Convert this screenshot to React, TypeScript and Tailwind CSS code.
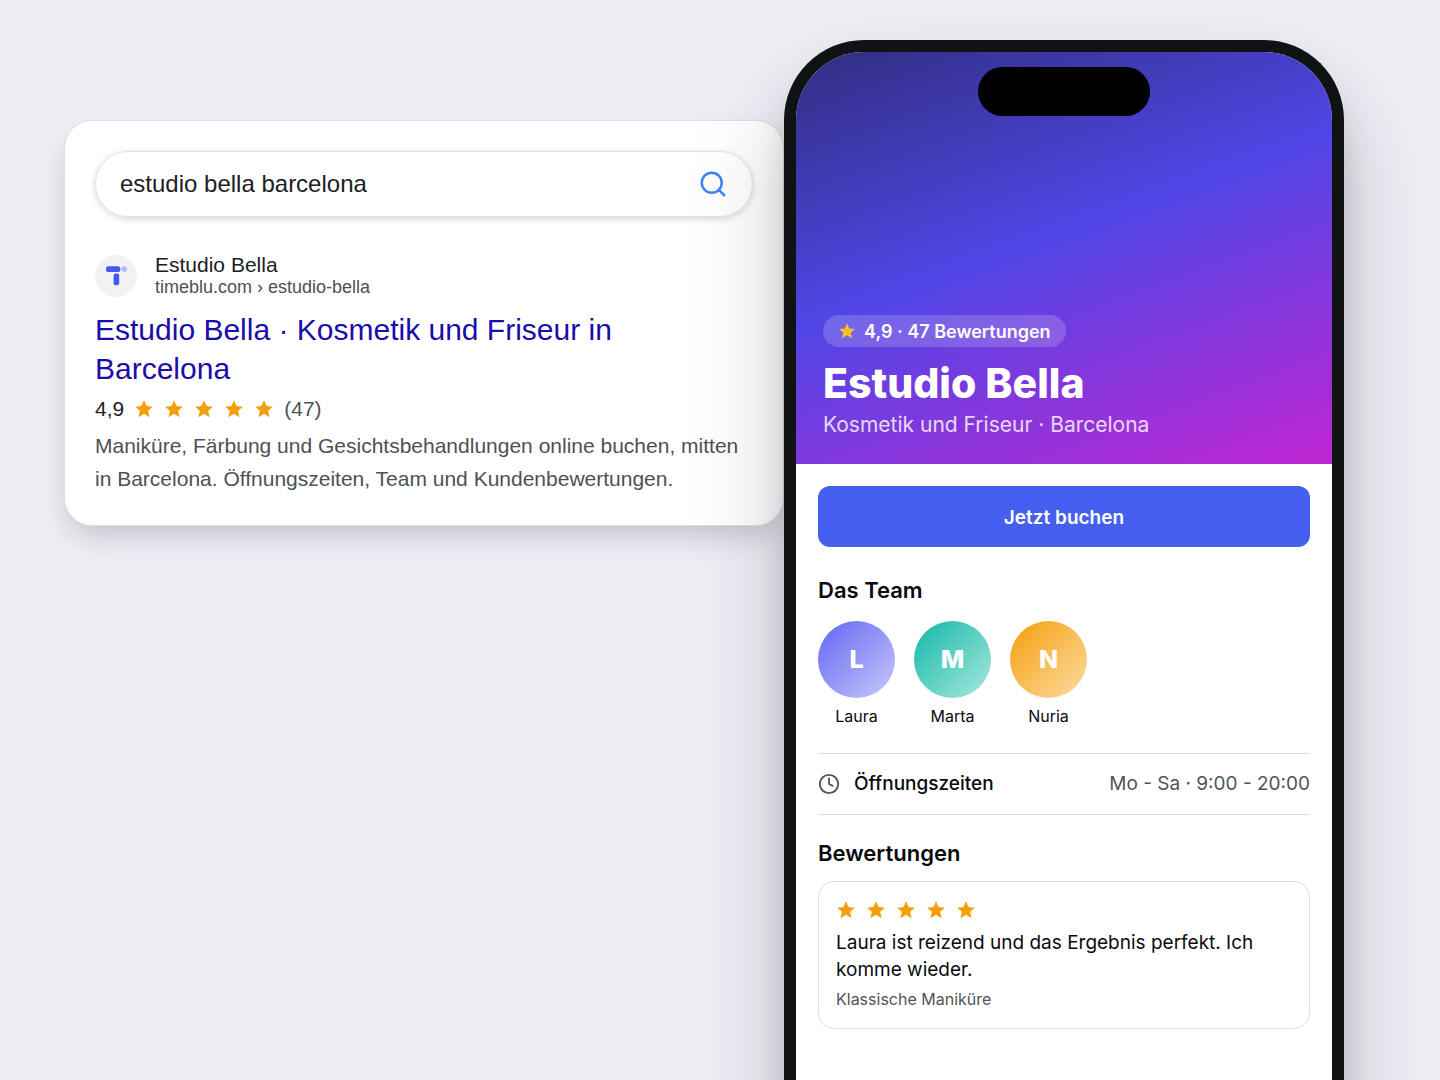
import { Clock, Search } from 'lucide-react';

const team = [
  { name: 'Laura', circle: 'bg-linear-135/srgb from-[#6366f1] to-[#c7c9fb]' },
  { name: 'Marta', circle: 'bg-linear-135/srgb from-[#14b8a6] to-[#a7e8de]' },
  { name: 'Nuria', circle: 'bg-linear-135/srgb from-[#f59e0b] to-[#fcdca3]' },
];

function Star({ className }: { className: string }) {
  return (
    <svg viewBox="0 0 24 24" fill="currentColor" className={className} aria-hidden="true">
      <path d="M12 1.5l3.1 7 7.6.7-5.7 5 1.7 7.6-6.7-4-6.7 4L7 14.2l-5.7-5 7.6-.7z" />
    </svg>
  );
}

function Stars() {
  return (
    <div className="flex gap-2.5 text-[#f59e0b]" role="img" aria-label="5 von 5 Sternen">
      <Star className="size-5" />
      <Star className="size-5" />
      <Star className="size-5" />
      <Star className="size-5" />
      <Star className="size-5" />
    </div>
  );
}

function SearchCard() {
  return (
    <section className="mt-20 min-w-0 flex-1 rounded-[28px] border border-[#dcdee3] bg-white p-[30px] font-['Liberation_Sans',Arial,sans-serif] shadow-[0_14px_30px_-6px_rgba(20,22,40,0.22)]">
      <form className="flex h-[66px] items-center rounded-full border border-[#dfe1e5] px-6 shadow-[0_2px_6px_rgba(32,33,36,0.18)]">
        <input
          type="text"
          aria-label="Suche"
          defaultValue="estudio bella barcelona"
          className="min-w-0 flex-1 bg-transparent text-[24px] text-[#202124] outline-none"
        />
        <button type="submit" aria-label="Suchen" className="text-[#4285f4]">
          <Search className="size-[30px]" />
        </button>
      </form>

      <div className="mt-9 flex items-end gap-[18px]">
        <div className="flex size-[42px] items-center justify-center rounded-full bg-[#f1f3f4]">
          <svg viewBox="0 0 22 20" className="h-5 w-[22px]" aria-hidden="true">
            <rect x="1" y="0.3" width="14.3" height="5.6" rx="2" fill="#4759ef" />
            <rect x="8.6" y="7.5" width="5.6" height="11.8" rx="2" fill="#4759ef" />
            <circle cx="19.2" cy="3.1" r="2.8" fill="#b4b8fb" />
          </svg>
        </div>
        <div>
          <p className="text-[21px] leading-6 text-[#202124]">Estudio Bella</p>
          <p className="text-[18px] leading-5 text-[#4d5156]">timeblu.com › estudio-bella</p>
        </div>
      </div>

      <h1 className="mt-[13px] text-[30px] leading-[39px] text-[#1a0dab]">
        <a href="#profil">Estudio Bella · Kosmetik und Friseur in Barcelona</a>
      </h1>
      <div className="mt-[9px] flex items-center gap-2.5 text-[21px] leading-6 text-[#4d5156]">
        <span className="text-[#202124]">4,9</span>
        <Stars />
        <span>(47)</span>
      </div>
      <p className="mt-2 text-[21px] leading-[33px] text-[#4d5156]">
        Maniküre, Färbung und Gesichtsbehandlungen online buchen, mitten in Barcelona. Öffnungszeiten, Team und Kundenbewertungen.
      </p>
    </section>
  );
}

function Phone() {
  return (
    <div
      id="profil"
      className="relative -mb-40 w-[560px] shrink-0 self-stretch rounded-t-[80px] border-12 border-b-0 border-[#111214] bg-white font-[Inter,sans-serif] text-[#0a0a0f] shadow-[0_50px_100px_0_rgba(20,22,40,0.2),0_30px_40px_-10px_rgba(0,0,0,0.25)]"
    >
      {/* dynamic island */}
      <div className="absolute top-[15px] left-1/2 h-[49px] w-[172px] -translate-x-1/2 rounded-full bg-black" />

      <header className="flex h-[412px] flex-col items-start justify-end rounded-t-[68px] bg-linear-160/srgb from-[#312e81] via-[#4f46e5] via-45% to-[#c026d3] px-[27px] pb-[25px] text-white">
        <div className="flex h-8 items-center gap-2 rounded-full bg-white/18 px-[15px] text-[18px] font-semibold">
          <Star className="size-[18px] text-[#fbbf24]" />
          4,9 · 47 Bewertungen
        </div>
        <h2 className="mt-3 text-[41px] leading-[48px] font-extrabold">Estudio Bella</h2>
        <p className="mt-1 text-[21px] leading-7 text-white/80">Kosmetik und Friseur · Barcelona</p>
      </header>

      <div className="px-[22px] pt-[22px]">
        <button type="button" className="h-[61px] w-full rounded-xl bg-[#465fef] pt-[3px] text-[19px] font-semibold text-white">
          Jetzt buchen
        </button>

        <h3 className="mt-7 text-[22px] leading-[30px] font-semibold">Das Team</h3>
        <ul className="mt-4 flex gap-[19px]">
          {team.map((member) => (
            <li key={member.name} className="flex flex-col items-center gap-2">
              <div className={`flex size-[77px] items-center justify-center rounded-full text-[25px] font-extrabold text-white ${member.circle}`}>
                {member.name[0]}
              </div>
              <span className="text-[16px] leading-5">{member.name}</span>
            </li>
          ))}
        </ul>

        <div className="mt-[27px] flex h-[62px] items-center border-y border-[#dedee2] text-[19px]">
          <Clock className="size-[22px] text-[#52525b]" />
          <span className="ml-3.5 font-medium">Öffnungszeiten</span>
          <span className="ml-auto text-[#52525b]">Mo - Sa · 9:00 - 20:00</span>
        </div>

        <h3 className="mt-[23px] text-[22px] leading-[30px] font-semibold">Bewertungen</h3>
        <article className="mt-[13px] rounded-2xl border border-[#dedee2] px-[17px] pt-[18px] pb-[17px]">
          <Stars />
          <p className="mt-[9px] text-[19px] leading-[27px]">Laura ist reizend und das Ergebnis perfekt. Ich komme wieder.</p>
          <p className="mt-1 text-[16px] leading-6 text-[#52525b]">Klassische Maniküre</p>
        </article>
      </div>
    </div>
  );
}

export default function App() {
  return (
    <main className="flex h-screen items-start overflow-hidden bg-[#eeeff5] pt-10 pr-24 pl-16">
      <SearchCard />
      <Phone />
    </main>
  );
}
